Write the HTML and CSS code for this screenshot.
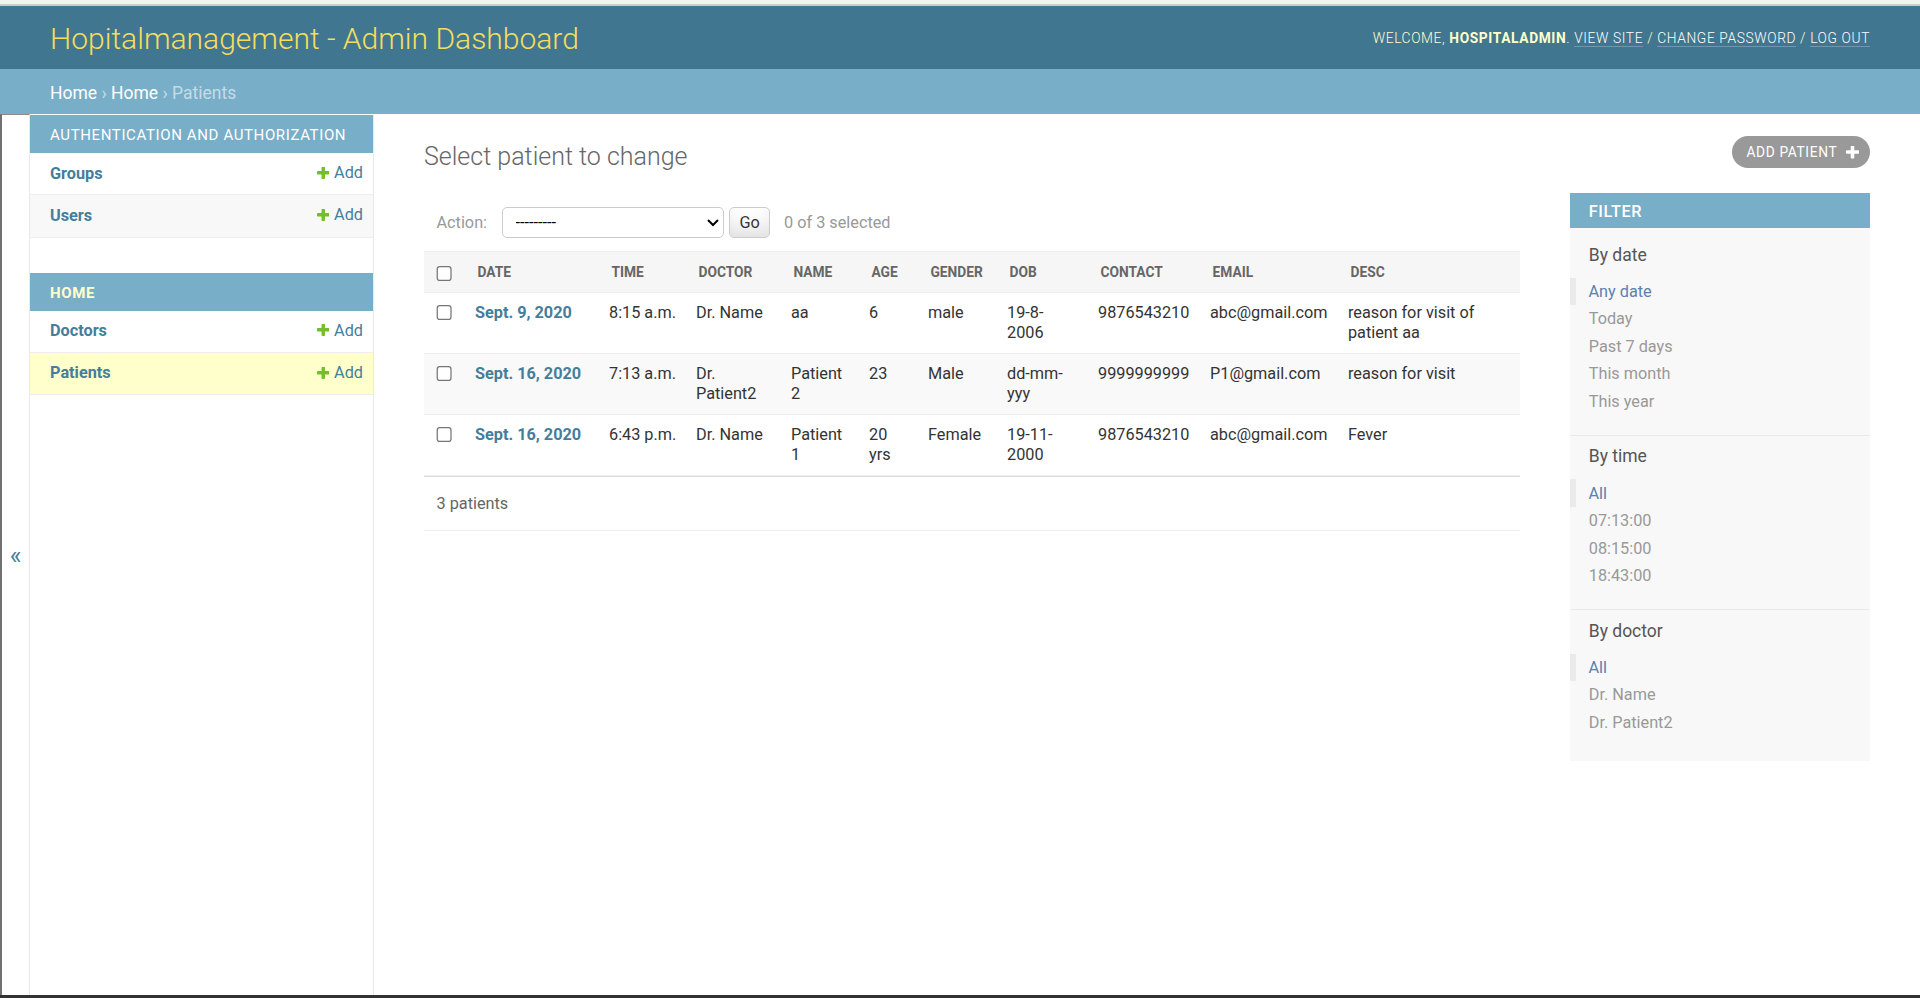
FILE: index.html
```html
<!DOCTYPE html>
<html lang="en">
<head>
<meta charset="utf-8">
<title>Select patient to change | Django site admin</title>
<link rel="stylesheet" href="styles.css">
</head>
<body>
<div class="window-strip"></div>
<div class="page">
  <header class="header">
    <h1 class="branding">Hopitalmanagement - Admin Dashboard</h1>
    <div class="user-tools">Welcome, <strong>hospitaladmin</strong>. <a href="#">View site</a> / <a href="#">Change password</a> / <a href="#">Log out</a></div>
  </header>
  <nav class="breadcrumbs"><a href="#">Home</a> › <a href="#">Home</a> › Patients</nav>
  <div class="main">
    <button class="toggle-nav" type="button">«</button>
    <aside class="nav-sidebar">
      <table class="app-module">
        <caption><a href="#" class="section">Authentication and Authorization</a></caption>
        <tr><th><a href="#">Groups</a></th><td><a href="#" class="addlink"><svg viewBox="192 192 1408 1408"><path fill="#70bf2b" d="M1600 736v192q0 40-28 68t-68 28h-416v416q0 40-28 68t-68 28h-192q-40 0-68-28t-28-68v-416h-416q-40 0-68-28t-28-68v-192q0-40 28-68t68-28h416v-416q0-40 28-68t68-28h192q40 0 68 28t28 68v416h416q40 0 68 28t28 68z"/></svg>Add</a></td></tr>
        <tr class="alt"><th><a href="#">Users</a></th><td><a href="#" class="addlink"><svg viewBox="192 192 1408 1408"><path fill="#70bf2b" d="M1600 736v192q0 40-28 68t-68 28h-416v416q0 40-28 68t-68 28h-192q-40 0-68-28t-28-68v-416h-416q-40 0-68-28t-28-68v-192q0-40 28-68t68-28h416v-416q0-40 28-68t68-28h192q40 0 68 28t28 68v416h416q40 0 68 28t28 68z"/></svg>Add</a></td></tr>
      </table>
      <table class="app-module">
        <caption><a href="#" class="section current">Home</a></caption>
        <tr><th><a href="#">Doctors</a></th><td><a href="#" class="addlink"><svg viewBox="192 192 1408 1408"><path fill="#70bf2b" d="M1600 736v192q0 40-28 68t-68 28h-416v416q0 40-28 68t-68 28h-192q-40 0-68-28t-28-68v-416h-416q-40 0-68-28t-28-68v-192q0-40 28-68t68-28h416v-416q0-40 28-68t68-28h192q40 0 68 28t28 68v416h416q40 0 68 28t28 68z"/></svg>Add</a></td></tr>
        <tr class="current-model"><th><a href="#">Patients</a></th><td><a href="#" class="addlink"><svg viewBox="192 192 1408 1408"><path fill="#70bf2b" d="M1600 736v192q0 40-28 68t-68 28h-416v416q0 40-28 68t-68 28h-192q-40 0-68-28t-28-68v-416h-416q-40 0-68-28t-28-68v-192q0-40 28-68t68-28h416v-416q0-40 28-68t68-28h192q40 0 68 28t28 68v416h416q40 0 68 28t28 68z"/></svg>Add</a></td></tr>
      </table>
    </aside>
    <div class="content">
      <div class="content-head">
        <h1 class="page-title">Select patient to change</h1>
        <a href="#" class="add-btn">Add patient<svg viewBox="192 192 1408 1408"><path fill="#fff" d="M1600 736v192q0 40-28 68t-68 28h-416v416q0 40-28 68t-68 28h-192q-40 0-68-28t-28-68v-416h-416q-40 0-68-28t-28-68v-192q0-40 28-68t68-28h416v-416q0-40 28-68t68-28h192q40 0 68 28t28 68v416h416q40 0 68 28t28 68z"/></svg></a>
      </div>
      <div class="changelist">
        <div class="form-container">
          <div class="actions">
            <label class="action-label">Action:</label>
            <select class="action-select"><option>---------</option></select>
            <button class="go-btn" type="button">Go</button>
            <span class="action-counter">0 of 3 selected</span>
          </div>
          <table class="results">
            <thead>
              <tr>
                <th class="c-cb"><input type="checkbox"></th>
                <th class="c-date">Date</th>
                <th class="c-time">Time</th>
                <th class="c-doctor">Doctor</th>
                <th class="c-name">Name</th>
                <th class="c-age">Age</th>
                <th class="c-gender">Gender</th>
                <th class="c-dob">DOB</th>
                <th class="c-contact">Contact</th>
                <th class="c-email">Email</th>
                <th class="c-desc">Desc</th>
              </tr>
            </thead>
            <tbody>
              <tr>
                <td class="cb"><input type="checkbox"></td>
                <th class="date"><a href="#">Sept. 9, 2020</a></th>
                <td class="nw">8:15 a.m.</td>
                <td>Dr. Name</td>
                <td>aa</td>
                <td>6</td>
                <td>male</td>
                <td>19-8-2006</td>
                <td class="nw">9876543210</td>
                <td class="nw">abc@gmail.com</td>
                <td>reason for visit of patient aa</td>
              </tr>
              <tr class="alt">
                <td class="cb"><input type="checkbox"></td>
                <th class="date"><a href="#">Sept. 16, 2020</a></th>
                <td class="nw">7:13 a.m.</td>
                <td>Dr. Patient2</td>
                <td>Patient 2</td>
                <td>23</td>
                <td>Male</td>
                <td>dd-mm-yyy</td>
                <td class="nw">9999999999</td>
                <td class="nw">P1@gmail.com</td>
                <td>reason for visit</td>
              </tr>
              <tr>
                <td class="cb"><input type="checkbox"></td>
                <th class="date"><a href="#">Sept. 16, 2020</a></th>
                <td class="nw">6:43 p.m.</td>
                <td>Dr. Name</td>
                <td>Patient 1</td>
                <td>20 yrs</td>
                <td>Female</td>
                <td>19-11-2000</td>
                <td class="nw">9876543210</td>
                <td class="nw">abc@gmail.com</td>
                <td>Fever</td>
              </tr>
            </tbody>
          </table>
          <p class="paginator">3 patients</p>
        </div>
        <div class="filter">
          <h2>Filter</h2>
          <h3>By date</h3>
          <ul>
            <li class="selected"><a href="#">Any date</a></li>
            <li><a href="#">Today</a></li>
            <li><a href="#">Past 7 days</a></li>
            <li><a href="#">This month</a></li>
            <li><a href="#">This year</a></li>
          </ul>
          <h3>By time</h3>
          <ul>
            <li class="selected"><a href="#">All</a></li>
            <li><a href="#">07:13:00</a></li>
            <li><a href="#">08:15:00</a></li>
            <li><a href="#">18:43:00</a></li>
          </ul>
          <h3>By doctor</h3>
          <ul>
            <li class="selected"><a href="#">All</a></li>
            <li><a href="#">Dr. Name</a></li>
            <li><a href="#">Dr. Patient2</a></li>
          </ul>
        </div>
      </div>
    </div>
  </div>
</div>
<div class="window-bottom"></div>
</body>
</html>
```
FILE: styles.css
```css
* { box-sizing: border-box; }

html, body {
  margin: 0;
  padding: 0;
  background: #fff;
}

body {
  font-family: Roboto, "Lucida Grande", "DejaVu Sans", Verdana, Arial, sans-serif;
  font-size: 14px;
  color: #333;
  overflow: hidden;
}

a { text-decoration: none; color: #447e9b; }

.window-strip {
  height: 6px;
  background: #f3f3f3;
  border-bottom: 2px solid #cdcdcd;
}

.window-bottom {
  height: 3px;
  background: #333;
}

.page {
  zoom: 1.25;
  min-height: 791.2px;
  display: flex;
  flex-direction: column;
}

/* Header */
.header {
  display: flex;
  justify-content: space-between;
  align-items: center;
  padding: 10px 40px;
  background: #417690;
  color: #ffc;
  height: 50.4px;
}

.branding {
  margin: 2px 20px 0 0;
  font-weight: 300;
  font-size: 24px;
  line-height: 30px;
  color: #f5dd5d;
}

.user-tools {
  margin-top: 1px;
  font-size: 11px;
  font-weight: 300;
  letter-spacing: 0.5px;
  text-transform: uppercase;
  text-align: right;
  color: #ffc;
}

.user-tools strong {
  font-weight: 700;
}

.user-tools a {
  color: #fff;
  border-bottom: 1px solid rgba(255, 255, 255, 0.25);
}

/* Breadcrumbs */
.breadcrumbs {
  background: #79aec8;
  padding: 11px 40px 9px;
  font-size: 14px;
  line-height: 16px;
  color: #c4dce8;
}

.breadcrumbs a { color: #fff; }

/* Main */
.main {
  flex: 1;
  display: flex;
}

.toggle-nav {
  flex: 0 0 24px;
  width: 24px;
  border: 0;
  border-left: 1.6px solid #707070;
  border-top: 0.8px solid #8a8a8a;
  border-right: 1px solid #eaeaea;
  background: #fff;
  color: #447e9b;
  font-family: Roboto, "DejaVu Sans", sans-serif;
  font-size: 20px;
  padding: 0;
  display: flex;
  align-items: center;
  justify-content: center;
}

.nav-sidebar {
  flex: 0 0 275.2px;
  border-top: 1px solid transparent;
  border-right: 1px solid #eaeaea;
  background: #fff;
}

.app-module {
  width: 100%;
  border-collapse: collapse;
  margin-bottom: 28px;
}

.app-module caption {
  text-align: left;
  padding: 9px 8px 7px 16px;
  background: #79aec8;
  font-size: 12px;
  line-height: 14.4px;
  font-weight: 400;
  letter-spacing: 0.5px;
  text-transform: uppercase;
}

.app-module caption a { color: #fff; }
.app-module caption a.current { color: #ffc; font-weight: 700; }

.app-module th {
  width: 100%;
  text-align: left;
  padding: 8px 8px 8px 16px;
  font-size: 13px;
  line-height: 16px;
  font-weight: 700;
  border-bottom: 1px solid #eee;
}

.app-module td {
  white-space: nowrap;
  padding: 8px;
  font-size: 13px;
  line-height: 16px;
  border-bottom: 1px solid #eee;
}

.app-module tr.alt { background: #f8f8f8; }
.app-module tr.current-model { background: #ffc; }

.addlink {
  display: inline-flex;
  align-items: center;
  gap: 4px;
}

.addlink svg {
  width: 10px;
  height: 10px;
}

/* Content */
.content {
  flex: 1;
  min-width: 0;
  padding: 20px 40px;
}

.content-head {
  display: flex;
  justify-content: space-between;
  align-items: flex-start;
  margin-bottom: 20px;
}

.page-title {
  margin: 2px 0 -2px;
  font-weight: 300;
  font-size: 20px;
  line-height: 23.4px;
  color: #666;
}

.add-btn {
  margin-top: -2.4px;
  display: flex;
  align-items: center;
  height: 25.6px;
  padding: 0 8.8px 0 12px;
  background: #999;
  color: #fff;
  border-radius: 15px;
  font-size: 11px;
  letter-spacing: 0.5px;
  text-transform: uppercase;
  font-weight: 400;
}

.add-btn svg {
  width: 10.4px;
  height: 10.4px;
  margin-left: 7px;
}

.changelist {
  display: flex;
  align-items: flex-start;
}

.form-container {
  flex: 1 1 auto;
  min-width: 0;
}

.actions {
  display: flex;
  align-items: center;
  padding: 10px;
  height: 46.4px;
  color: #999;
  font-size: 13px;
}

.action-label { font-size: 13px; color: #999; }

.action-select {
  margin-left: 12px;
  width: 177.6px;
  height: 25px;
  border: 1px solid #ccc;
  border-radius: 4px;
  background: #fff;
  color: #000;
  font-family: Roboto, sans-serif;
  font-size: 13px;
  padding: 0 0 0 6px;
}

.go-btn {
  margin-left: 4px;
  height: 25px;
  width: 33px;
  padding: 0;
  font-family: Roboto, sans-serif;
  font-size: 13px;
  color: #333;
  border: 1px solid #ccc;
  border-radius: 4px;
  background: #fff;
  box-shadow: 0 -15px 20px -10px rgba(0, 0, 0, 0.15) inset;
}

.action-counter {
  margin-left: 11px;
  color: #999;
}

.results {
  width: 100%;
  border-collapse: collapse;
  table-layout: fixed;
}

.results thead th {
  background: #f6f6f6;
  color: #666;
  font-size: 11px;
  font-weight: 700;
  text-transform: uppercase;
  text-align: left;
  line-height: 16px;
  padding: 8px 10px;
  border-top: 1px solid #eee;
  border-bottom: 1px solid #eee;
  white-space: nowrap;
  vertical-align: middle;
}

.results thead th.c-cb { padding: 0; text-align: center; }

.c-cb { width: 32.8px; }
.c-date { width: 107.2px; }
.c-time { width: 69.6px; }
.c-doctor { width: 76px; }
.c-name { width: 62.4px; }
.c-age { width: 47.2px; }
.c-gender { width: 63.2px; }
.c-dob { width: 72.8px; }
.c-contact { width: 89.6px; }
.c-email { width: 110.4px; }

.results input[type="checkbox"] {
  margin: 0;
  width: 13px;
  height: 13px;
  vertical-align: middle;
}

.results tbody td,
.results tbody th {
  padding: 8px;
  font-size: 13px;
  line-height: 16px;
  vertical-align: top;
  text-align: left;
  border-bottom: 1px solid #eee;
  color: #333;
}

.results tbody th.date { font-weight: 700; white-space: nowrap; }
.results tbody td.nw { white-space: nowrap; }

.results tbody td.cb {
  padding: 9px 0 0;
  text-align: center;
}

.results tbody td.cb input { vertical-align: top; }

.results tbody tr.alt { background: #f9f9f9; }

.paginator {
  margin: 0;
  padding: 10px;
  font-size: 13px;
  line-height: 22px;
  color: #666;
  border-top: 1px solid #ddd;
  border-bottom: 1px solid #eee;
}

/* Filter */
.filter {
  flex: 0 0 240px;
  margin-left: 40px;
  background: #f8f8f8;
}

.filter h2 {
  margin: 0 0 13px;
  padding: 6px 15px 4px;
  font-size: 13px;
  line-height: 18px;
  font-weight: 500;
  letter-spacing: 0.5px;
  text-transform: uppercase;
  background: #79aec8;
  color: #fff;
}

.filter h3 {
  margin: 8.6px 0 10px;
  padding: 0 15px;
  font-size: 14px;
  line-height: 16.4px;
  font-weight: 400;
  color: #555;
}

.filter ul {
  list-style: none;
  margin: 5px 0;
  padding: 0 15px 15.6px;
  border-bottom: 1px solid #eaeaea;
}

.filter ul:last-child {
  border-bottom: none;
  margin-bottom: 4px;
}

.filter li {
  padding: 1px 0;
  font-size: 13px;
  line-height: 20px;
}

.filter li a { color: #999; display: block; }

.filter li.selected {
  border-left: 5px solid #eaeaea;
  padding-left: 10px;
  margin-left: -15px;
}

.filter li.selected a { color: #5b80b2; }
```
